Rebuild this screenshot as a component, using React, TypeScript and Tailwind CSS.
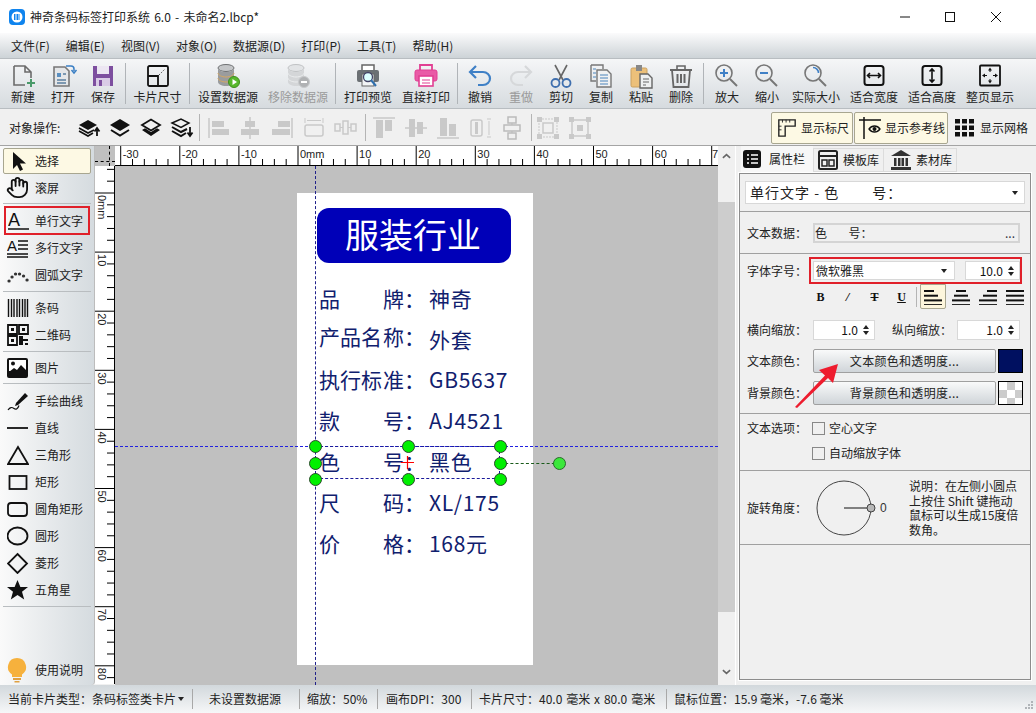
import React from "react";
import { Hand } from "lucide-react";

const S = ({ children, cn = "w-8 h-[26px]", vb = "0 0 32 26" }: { children: React.ReactNode; cn?: string; vb?: string }) => (
  <svg viewBox={vb} className={cn} fill="none">{children}</svg>
);

const Db = ({ gray }: { gray?: boolean }) => {
  const c1 = gray ? "#d4d6d8" : "#9a9c9e";
  const c2 = gray ? "#c0c2c4" : "#6f7173";
  return (
    <S>
      <ellipse cx="14" cy="5" rx="8" ry="3.5" fill={gray ? "#e2e4e6" : "#c4c6c8"} stroke={c2} />
      <path d="M6 5v14c0 2 3.5 4 8 4s8-2 8-4V5c0 2-3.5 4-8 4S6 7 6 5z" fill={c1} />
      <path d="M6 10c0 2 3.5 4 8 4s8-2 8-4M6 15c0 2 3.5 4 8 4s8-2 8-4" stroke={gray ? "#eceeef" : "#d8a860"} />
      <circle cx="22" cy="19" r="5.5" fill={gray ? "#b0b2b4" : "#58b82c"} stroke={gray ? "#c8cacc" : "#3f8f1c"} />
      {gray ? <path d="M19 19h6" stroke="#fff" strokeWidth="2" /> : <path d="M20.5 16l4.5 3-4.5 3z" fill="#fff" />}
    </S>
  );
};

const Mag = ({ children }: { children?: React.ReactNode }) => (
  <S>
    <circle cx="13" cy="10" r="8" stroke="#777" strokeWidth="1.6" />
    <path d="M19 16l7 7" stroke="#777" strokeWidth="2" />
    {children}
  </S>
);

const Fit = ({ children }: { children: React.ReactNode }) => (
  <S>
    <rect x="6.5" y="3" width="19" height="19" rx="2.5" stroke="#111" strokeWidth="2" />
    {children}
  </S>
);

const tools: { t: string; w: string; icon: React.ReactNode; gray?: boolean; sep?: string }[] = [
  { t: "新建", w: "w-[40px]", icon: <S><path d="M7 3h11l6 6v6M24 9h-6V3M7 3v19h11" stroke="#6b6b6b" strokeWidth="1.6" /><path d="M24 16v8M20 20h8" stroke="#4a9a6a" strokeWidth="2" /></S> },
  { t: "打开", w: "w-[40px]", icon: <S><path d="M7 4h11l4 4v15H7z" fill="#e4e6e8" stroke="#777" strokeWidth="1.6" /><rect x="10" y="10" width="4" height="4" fill="#5a8fc0" /><path d="M10 17h9M10 20h9M16 11h3" stroke="#5a7f9f" strokeWidth="1.4" /><path d="M19 3h5c2 0 3 1 3 3v2M24.5 7l2.5 3 2.5-3" stroke="#3a7fc4" strokeWidth="1.5" /></S> },
  { t: "保存", w: "w-[40px]", sep: "ml-[2px]", icon: <S><rect x="6" y="3" width="20" height="20" fill="#7d4f9f" /><rect x="10" y="3" width="12" height="8" fill="#ece6f2" /><rect x="9" y="15" width="14" height="8" fill="#d9cbe6" /><rect x="12" y="17" width="3" height="6" fill="#7d4f9f" /></S> },
  { t: "卡片尺寸", w: "w-[63px]", sep: "ml-0", icon: <S><rect x="6" y="3" width="20" height="20" rx="1.5" stroke="#111" strokeWidth="1.8" /><path d="M6 13h10v10" stroke="#111" strokeWidth="1.8" /><path d="M17 12l6-6" stroke="#555" strokeDasharray="1.5 1.5" /></S> },
  { t: "设置数据源", w: "w-[76px]", icon: <Db /> },
  { t: "移除数据源", w: "w-[64px]", gray: true, sep: "ml-[5px]", icon: <Db gray /> },
  { t: "打印预览", w: "w-[64px]", icon: <S><rect x="10" y="2" width="12" height="6" fill="#fff" stroke="#666" strokeWidth="1.5" /><rect x="5" y="7" width="22" height="12" rx="2" fill="#6b7074" /><rect x="10" y="11" width="12" height="12" fill="#f2f4f5" stroke="#666" /><circle cx="16" cy="14" r="4.5" fill="#dff" stroke="#446" strokeWidth="1.3" /><path d="M19 17l5 6" stroke="#2f6fae" strokeWidth="2" /></S> },
  { t: "直接打印", w: "w-[52px]", sep: "ml-[5px]", icon: <S><path d="M10 7V2h12v5" stroke="#e13f93" strokeWidth="1.8" /><rect x="5" y="7" width="22" height="11" rx="2" fill="#e95aa6" stroke="#e13f93" /><rect x="9" y="13" width="14" height="10" fill="#fff" stroke="#e13f93" strokeWidth="1.6" /><path d="M12 17h8M12 20h8" stroke="#e13f93" /></S> },
  { t: "撤销", w: "w-[44px]", icon: <S><path d="M12 3L6 9l6 6" stroke="#3f80c6" strokeWidth="2.2" /><path d="M6 9h13c4 0 7 3 7 6.5S23 22 19 22h-5" stroke="#3f80c6" strokeWidth="2.2" /></S> },
  { t: "重做", w: "w-[38px]", gray: true, icon: <S><path d="M20 3l6 6-6 6" stroke="#d6d8da" strokeWidth="2.2" /><path d="M26 9H13c-4 0-7 3-7 6.5S9 22 13 22h5" stroke="#d6d8da" strokeWidth="2.2" /></S> },
  { t: "剪切", w: "w-[42px]", icon: <S><path d="M10 2l8 15M22 2l-8 15" stroke="#666" strokeWidth="1.6" /><circle cx="10.5" cy="20" r="4" stroke="#3f6fae" strokeWidth="1.8" /><circle cx="21.5" cy="20" r="4" stroke="#3f6fae" strokeWidth="1.8" /></S> },
  { t: "复制", w: "w-[38px]", icon: <S><path d="M6 2h12v4" stroke="#777" strokeWidth="1.4" /><path d="M6 2v16h5" stroke="#777" strokeWidth="1.4" /><path d="M8 6h3M8 10h3M8 14h3" stroke="#4a84bb" /><path d="M12 7h10l4 4v13H12z" fill="#f0f1f2" stroke="#777" strokeWidth="1.4" /><path d="M15 12h8M15 15h8M15 18h8M15 21h8" stroke="#4a84bb" /></S> },
  { t: "粘贴", w: "w-[42px]", icon: <S><rect x="6" y="5" width="16" height="19" rx="1.5" fill="#ecc07a" stroke="#c9a060" /><rect x="11" y="2" width="6" height="6" fill="#888" /><path d="M15 11h8l4 4v10H15z" fill="#eef0f1" stroke="#666" strokeWidth="1.4" /><path d="M18 16h6M18 19h6M18 22h3" stroke="#666" /></S> },
  { t: "删除", w: "w-[38px]", sep: "ml-[3px]", icon: <S><path d="M5 7h22" stroke="#666" strokeWidth="2" /><path d="M12 7V3h8v4" stroke="#666" strokeWidth="1.6" /><path d="M7 7l1.5 17h15L25 7" stroke="#666" strokeWidth="1.8" /><path d="M12.5 11v9M16 11v9M19.5 11v9" stroke="#666" strokeWidth="2" /></S> },
  { t: "放大", w: "w-[46px]", icon: <Mag><path d="M13 6v8M9 10h8" stroke="#3f80c6" strokeWidth="2" /></Mag> },
  { t: "缩小", w: "w-[34px]", icon: <Mag><path d="M9 10h8" stroke="#3f80c6" strokeWidth="2" /></Mag> },
  { t: "实际大小", w: "w-[64px]", icon: <Mag><path d="M13 4.5a5.5 5.5 0 0 1 5.5 5.5" stroke="#3f80c6" strokeWidth="1.6" /></Mag> },
  { t: "适合宽度", w: "w-[52px]", icon: <Fit><path d="M9.5 12.5h13M12 10l-2.5 2.5L12 15M20 10l2.5 2.5L20 15" stroke="#111" strokeWidth="1.6" /></Fit> },
  { t: "适合高度", w: "w-[64px]", icon: <Fit><path d="M16 6v13M13.5 8.5L16 6l2.5 2.5M13.5 16.5L16 19l2.5-2.5" stroke="#111" strokeWidth="1.6" /></Fit> },
  { t: "整页显示", w: "w-[52px]", icon: <S><rect x="6" y="2.500" width="20" height="20" rx="1" stroke="#111" strokeWidth="1.800" /><path d="M16 4.500l-2 3h4zM16 20.500l-2-3h4zM8 12.500l3-2v4zM24 12.500l-3-2v4z" fill="#111" /><path d="M16 7v2M16 16v2M11 12.500h2M19 12.500h2" stroke="#111" /></S> },
];

const seps = new Set(["保存", "卡片尺寸", "移除数据源", "直接打印", "删除"]);

const Layer = ({ mode }: { mode: number }) => (
  <S cn="w-[24px] h-[24px]" vb="0 0 24 24">
    {mode === 1 && <g><path d="M2 9l9-5 9 5-9 5z" fill="#111" /><path d="M2 12l9 5 6-3M2 15l9 5 5-3" stroke="#111" strokeWidth="1.6" /><path d="M20 20v-7M17.5 15.5L20 12l2.500 3.500" stroke="#111" strokeWidth="1.800" /></g>}
    {mode === 2 && <g><path d="M2 9l10-6 10 6-10 6z" fill="#111" /><path d="M3 14l9 5.500 9-5.500" stroke="#111" strokeWidth="2" /></g>}
    {mode === 3 && <g><path d="M3 9l9-5.500L21 9l-9 5.500z" stroke="#111" strokeWidth="1.800" /><path d="M3 14l9 6 9-6-3-1.800-6 3.800-6-3.800z" fill="#111" /></g>}
    {mode === 4 && <g><path d="M2 7l9-4 8 4-8 4.500z" stroke="#111" strokeWidth="1.500" /><path d="M2 11l9 5 6-3M2 15l9 5 5-3" stroke="#111" strokeWidth="2" /><path d="M20 11v8M17.500 16.500L20 20l2.500-3.500" stroke="#111" strokeWidth="1.800" /></g>}
  </S>
);

const G = "#c9c9c9";
const grayIcons: React.ReactNode[] = [
  <><path d="M3 2v20" stroke={G} strokeWidth="1.500" /><rect x="6" y="5" width="12" height="6" fill={G} /><rect x="6" y="13" width="17" height="6" fill={G} /></>,
  <><path d="M12 1v22" stroke={G} strokeWidth="1.500" /><rect x="7" y="5" width="10" height="6" fill={G} /><rect x="3" y="13" width="18" height="6" fill={G} /></>,
  <><path d="M22 2v20" stroke={G} strokeWidth="1.500" /><rect x="8" y="5" width="12" height="6" fill={G} /><rect x="2" y="13" width="18" height="6" fill={G} /></>,
  <><path d="M3 2v5M21 2v5M5 4.500h14" stroke={G} /><rect x="3" y="9" width="18" height="11" rx="2" stroke={G} strokeWidth="1.500" /></>,
  <><rect x="1" y="8" width="5" height="7" stroke={G} strokeWidth="1.500" /><rect x="9" y="5" width="5" height="13" stroke={G} strokeWidth="1.500" /><rect x="17" y="8" width="5" height="7" stroke={G} strokeWidth="1.500" /><path d="M6 11.500h3M14 11.500h3" stroke={G} /></>,
  <><path d="M1 2h22" stroke={G} strokeWidth="1.500" /><rect x="4" y="4" width="7" height="18" fill={G} /><rect x="13" y="4" width="7" height="11" fill={G} /></>,
  <><path d="M1 12h22" stroke={G} strokeWidth="1.500" /><rect x="5" y="3" width="6" height="18" fill={G} /><rect x="13" y="6" width="6" height="12" fill={G} /></>,
  <><path d="M1 22h22" stroke={G} strokeWidth="1.500" /><rect x="4" y="2" width="7" height="18" fill={G} /><rect x="13" y="8" width="7" height="12" fill={G} /></>,
  <><rect x="3" y="4" width="11" height="16" rx="2" stroke={G} strokeWidth="1.500" /><rect x="7" y="6" width="3" height="12" fill={G} /><path d="M19 3h4M19 21h4M21 5v14" stroke={G} /></>,
  <><rect x="8" y="1" width="8" height="6" stroke="#bbb" strokeWidth="1.500" /><rect x="4" y="9" width="16" height="6" stroke="#bbb" strokeWidth="1.500" /><rect x="8" y="17" width="8" height="6" stroke="#bbb" strokeWidth="1.500" /><path d="M12 7v2M12 15v2" stroke="#bbb" /></>,
  <><path d="M3 3h18v18H3z" stroke={G} strokeDasharray="2 1" /><rect x="7" y="7" width="10" height="10" stroke={G} strokeWidth="1.500" /><path d="M1 1h5v5H1zM18 1h5v5h-5zM1 18h5v5H1zM18 18h5v5h-5z" fill={G} /></>,
  <><path d="M4 4h16v16H4z" stroke={G} strokeWidth="1.500" /><path d="M1 1h5v5H1zM18 1h5v5h-5zM1 18h5v5H1zM18 18h5v5h-5zM9 9h6v6H9z" fill={G} /></>,
];

const Gi = ({ i }: { i: number }) => (
  <div className="w-[32px] flex justify-center"><S cn="w-[24px] h-[24px]" vb="0 0 24 24">{grayIcons[i]}</S></div>
);

const Vsep = () => <div className="w-px h-[27px] bg-[#b4b4b4]" />;

const LeftItem = ({ icon, t, cn = "" }: { icon: React.ReactNode; t: string; cn?: string }) => (
  <div className={`flex items-center h-[27px] ${cn}`}>
    <div className="w-[35px] pl-[7px] flex justify-start shrink-0">{icon}</div>
    <span className="text-[12px] text-[#222] whitespace-nowrap">{t}</span>
  </div>
);

const Ls = ({ children }: { children: React.ReactNode }) => (
  <svg viewBox="0 0 22 22" className="w-[22px] h-[22px]" fill="none">{children}</svg>
);

const LSep = ({ cn }: { cn: string }) => <div className={`h-px mx-[3px] bg-[#b9bdc0] ${cn}`} />;

const Ruler = () => {
  const ticks: React.ReactNode[] = [];
  for (let i = -40; i < 45; i++) {
    const x = 298 + i * 11.82 - 115;
    if (x < 0 || x > 603) continue;
    const major = i % 5 === 0;
    ticks.push(<line key={i} x1={x} x2={x} y1={major ? 0 : 13} y2={19} stroke="#000" />);
    if (major) ticks.push(
      <text key={"t" + i} x={i === 35 ? x + 0.300 : x + 2} y={12} fontSize="11" fill="#222" fontFamily="'Liberation Sans',sans-serif">
        {i === 0 ? "0mm" : i === 35 ? "7" : String(i * 2)}
      </text>
    );
  }
  return (
    <svg className="w-[603px] h-[20px] block" viewBox="0 0 603 20">
      <rect width="603" height="20" fill="#fff" />
      <line x1="0" x2="603" y1="19.500" y2="19.500" stroke="#000" />
      {ticks}
    </svg>
  );
};

const VRuler = () => {
  const ticks: React.ReactNode[] = [];
  for (let i = -2; i < 42; i++) {
    const y = 193 - 166 + i * 11.82;
    if (y < 0 || y > 518) continue;
    const major = i % 5 === 0;
    ticks.push(<line key={i} y1={y} y2={y} x1={major ? 0 : 12} x2={19} stroke="#000" />);
    if (major) ticks.push(
      <text key={"t" + i} x={0} y={0} transform={`translate(3 ${y + 2}) rotate(90)`} fontSize="11" fill="#222" fontFamily="'Liberation Sans',sans-serif">
        {i === 0 ? "0mm" : String(i * 2)}
      </text>
    );
  }
  return (
    <svg className="w-[20px] h-[518px] block" viewBox="0 0 20 518">
      <rect width="20" height="518" fill="#fff" />
      <line x1="19.500" x2="19.500" y1="0" y2="518" stroke="#000" />
      {ticks}
    </svg>
  );
};

const rows: [string, string, string, string][] = [
  ["品", "牌：", "神奇", ""],
  ["产品名", "称：", "外套", "-translate-y-[3px]"],
  ["执行标", "准：", "GB5637", ""],
  ["款", "号：", "AJ4521", ""],
  ["色", "号：", "黑色", ""],
  ["尺", "码：", "XL/175", ""],
  ["价", "格：", "168元", ""],
];

const Handle = ({ cn }: { cn: string }) => (
  <div className={`absolute w-[13px] h-[13px] rounded-full bg-[#00f000] border border-[#2a4a2a] ${cn}`} />
);

const Spin = ({ v, cn }: { v: string; cn: string }) => (
  <div className={`flex items-center justify-end bg-white border border-[#d8d8d8] text-[12px] text-[#111] ${cn}`}>
    <span>{v}</span>
    <span className="w-[16px] flex flex-col items-center gap-[2px]">
      <span className="w-0 h-0 border-x-[3px] border-x-transparent border-b-[4px] border-b-[#222]" />
      <span className="w-0 h-0 border-x-[3px] border-x-transparent border-t-[4px] border-t-[#222]" />
    </span>
  </div>
);

const Label = ({ t, cn = "" }: { t: string; cn?: string }) => (
  <span className={`text-[12px] text-[#222] whitespace-nowrap ${cn}`}>{t}</span>
);

const Caret = () => <span className="w-0 h-0 border-x-[3px] border-x-transparent border-t-[4px] border-t-[#222]" />;

const PSep = () => <div className="h-px bg-[#a0a0a0] shrink-0" />;

const AlignIcon = ({ lines }: { lines: [number, number][] }) => (
  <svg viewBox="0 0 18 16" className="w-[18px] h-[16px]">
    {lines.map(([x, w], i) => <rect key={i} x={x} y={1 + i * 4.700} width={w} height="2" fill="#111" />)}
  </svg>
);

export default function App() {
  return (
    <div className="relative w-[1036px] h-[713px] overflow-hidden flex flex-col bg-[#f0f0f0] font-['Noto_Sans_CJK_SC','Noto_Sans',sans-serif]">
      {/* title bar */}
      <div className="h-[33px] bg-white flex items-center shrink-0">
        <svg viewBox="0 0 16 16" className="w-[16px] h-[16px] ml-[9px] mr-[5px]">
          <rect width="16" height="16" rx="4" fill="#0f84ee" />
          <circle cx="8" cy="8" r="5.500" fill="#fff" />
          <path d="M5.500 5v6M7 5v6M8.500 5v6M10 5v6" stroke="#0f84ee" />
        </svg>
        <span className="text-[12px] text-[#222] [word-spacing:1.500px]">神奇条码标签打印系统 6.0 - 未命名2.lbcp*</span>
        <div className="ml-auto flex items-center">
          <svg viewBox="0 0 140 20" className="w-[140px] h-[20px] mr-[4px]">
            <path d="M8 10h10" stroke="#111" />
            <rect x="53.500" y="5.500" width="9" height="9" fill="none" stroke="#111" />
            <path d="M99 5l10 10M109 5l-10 10" stroke="#111" />
          </svg>
        </div>
      </div>
      {/* menu */}
      <div className="h-[25px] shrink-0 flex items-center pl-[11px] gap-[16px] bg-linear-to-b from-[#fbfbfc] to-[#cdd3d7] text-[12px] text-[#222]">
        {["文件(F)", "编辑(E)", "视图(V)", "对象(O)", "数据源(D)", "打印(P)", "工具(T)", "帮助(H)"].map((m) => (
          <span key={m} className="whitespace-nowrap">{m}</span>
        ))}
      </div>
      {/* toolbar */}
      <div className="h-[51px] shrink-0 flex items-start pl-[3px] pt-[4px] border-y border-[#b8bdc1] bg-linear-to-b from-[#f5f6f7] to-[#d6dbdf]">
        {tools.map((tool) => (
          <React.Fragment key={tool.t}>
            <div className={`${tool.w} shrink-0 flex flex-col items-center`}>
              {tool.icon}
              <span className={`text-[12px] leading-[16px] whitespace-nowrap ${tool.gray ? "text-[#9a9a9a]" : "text-[#222]"}`}>{tool.t}</span>
            </div>
            {seps.has(tool.t) && <div className={`w-px h-[41px] bg-[#b0b4b8] shrink-0 ${tool.sep ?? ""}`} />}
          </React.Fragment>
        ))}
      </div>
      {/* object row */}
      <div className="h-[37px] shrink-0 flex items-center pl-[9px] pt-px bg-[#f0f0f0] border-b border-[#a4a4a4]">
        <span className="text-[12px] text-[#222] w-[64px] whitespace-nowrap">对象操作:</span>
        <div className="flex w-[126px]">
          {[1, 2, 3, 4].map((m) => <div key={m} className="w-[31px] flex justify-center"><Layer mode={m} /></div>)}
        </div>
        <Vsep />
        <div className="flex ml-[2px]">{[0, 1, 2, 3, 4].map((i) => <Gi key={i} i={i} />)}</div>
        <div className="ml-[3px]"><Vsep /></div>
        <div className="flex ml-[2px]">{[5, 6, 7, 8, 9].map((i) => <Gi key={i} i={i} />)}</div>
        <div className="ml-[3px]"><Vsep /></div>
        <div className="flex">{[10, 11].map((i) => <Gi key={i} i={i} />)}</div>
        <div className="ml-auto flex items-center pr-[8px]">
          <div className="w-[82px] h-[32px] flex items-center gap-[4px] pl-[5px] rounded-[2px] border border-[#a8a690] bg-[#fdf9e4]">
            <svg viewBox="0 0 22 22" className="w-[20px] h-[20px] shrink-0" fill="none"><path d="M2 2h18v7H9v11H2z" stroke="#222" strokeWidth="1.500" /><path d="M6 2v3M10 2v3M14 2v3M2 9h3M2 13h3" stroke="#222" /></svg>
            <span className="text-[12px] text-[#222] whitespace-nowrap">显示标尺</span>
          </div>
          <div className="w-[94px] h-[32px] ml-px flex items-center gap-[2px] pl-[4px] rounded-[2px] border border-[#a8a690] bg-[#fdf9e4]">
            <svg viewBox="0 0 24 22" className="w-[24px] h-[22px] shrink-0" fill="none"><path d="M0 3h22M5 0v22" stroke="#111" strokeWidth="1.500" /><path d="M10 12c3-4 8-4 11 0-3 4-8 4-11 0z" stroke="#111" strokeWidth="1.300" /><circle cx="15.500" cy="12" r="2" fill="#111" /></svg>
            <span className="text-[12px] text-[#222] whitespace-nowrap">显示参考线</span>
          </div>
          <svg viewBox="0 0 20 18" className="w-[20px] h-[18px] ml-[7px] mr-[5px] shrink-0" fill="#111">
            {[0, 7, 14].flatMap((x) => [0, 6.500, 13].map((y) => <rect key={`${x}-${y}`} x={x} y={y} width="5" height="4.500" />))}
          </svg>
          <span className="text-[12px] text-[#222] whitespace-nowrap">显示网格</span>
        </div>
      </div>
      {/* main */}
      <div className="flex-1 flex min-h-0">
        {/* left panel */}
        <div className="w-[95px] shrink-0 flex flex-col pt-[2px] pb-[2px] border-r border-[#bcbcbc] rounded-br-[4px] bg-linear-to-r from-[#fafafa] to-[#d5dbdf]">
          <LeftItem
            cn="!h-[26px] mx-[3px] border border-[#a8a690] rounded-[2px] bg-[#fdf9e4] [&>div]:pl-[3px] [&>div]:w-[31px]"
            t="选择"
            icon={<Ls><path d="M6 2v17l4-4 3 6 3-1.500-3-6h6z" fill="#111" /></Ls>}
          />
          <LeftItem t="滚屏" icon={<Hand size={23} strokeWidth={1.900} className="text-[#111] -ml-[1px]" />} />
          <LSep cn="mt-[2px]" />
          <LeftItem
            cn="!h-[29px] mt-[2px] -mb-px mx-[4px] mr-[4px] border-2 border-[#e0202a] [&>div]:pl-[2px] [&>div]:w-[29px]"
            t="单行文字"
            icon={<Ls><text x="0" y="16" fontSize="18" fill="#111" fontFamily="'Liberation Sans',sans-serif">A</text><path d="M0 19h21" stroke="#111" strokeWidth="1.500" /></Ls>}
          />
          <LeftItem t="多行文字" icon={<Ls><text x="0" y="14" fontSize="15" fill="#111" fontFamily="'Liberation Sans',sans-serif">A</text><path d="M11 4h10M11 8h10M11 12h10M0 17h21M0 20h21" stroke="#111" strokeWidth="1.300" /></Ls>} />
          <LeftItem t="圆弧文字" icon={<Ls><path d="M2 17h.1M5 13h.1M8.500 10h.1M12.500 10h.1M16.500 12h.1M20 16h.1" stroke="#333" strokeWidth="3.200" strokeLinecap="round" /></Ls>} />
          <LSep cn="mt-[3px]" />
          <LeftItem cn="mt-[2px]" t="条码" icon={<Ls><path d="M1.500 2v18M4.500 2v18M7 2v18M10 2v18M12.500 2v18M15.500 2v18M18 2v18M20.500 2v18" stroke="#111" strokeWidth="1.400" /></Ls>} />
          <LeftItem t="二维码" icon={<Ls><path d="M1 1h9v9H1zM12 1h9v9h-9zM1 12h9v9H1z" stroke="#111" strokeWidth="1.800" /><path d="M4 4h3v3H4zM15 4h3v3h-3zM4 15h3v3H4zM12 12h4v3h5v2h-5v4h-4zM18 19h3v2h-3z" fill="#111" /></Ls>} />
          <LSep cn="mt-[3px]" />
          <LeftItem cn="mt-[2px]" t="图片" icon={<Ls><rect x="0" y="1" width="21" height="20" rx="2" fill="#111" /><rect x="2" y="3" width="17" height="11" fill="#fff" /><circle cx="6" cy="6.500" r="2" fill="#111" /><path d="M2 15l5-4 3 2 4-5 5 5v3H2z" fill="#111" /></Ls>} />
          <LSep cn="mt-[2px]" />
          <LeftItem cn="mt-[3px]" t="手绘曲线" icon={<Ls><path d="M9 13L18 3l3 3-10 9-3 1z" fill="#111" /><path d="M1 20c2-3 4-3 6-1.500s4 0 5-3" stroke="#111" strokeWidth="1.200" /></Ls>} />
          <LeftItem t="直线" icon={<Ls><path d="M0 11h21" stroke="#111" strokeWidth="1.800" /></Ls>} />
          <LeftItem t="三角形" icon={<Ls><path d="M11 3L1 20h20z" stroke="#111" strokeWidth="1.800" /></Ls>} />
          <LeftItem t="矩形" icon={<Ls><rect x="2.500" y="5" width="17" height="13" stroke="#111" strokeWidth="1.800" /></Ls>} />
          <LeftItem t="圆角矩形" icon={<Ls><rect x="1" y="5" width="19" height="13" rx="3" stroke="#111" strokeWidth="1.800" /></Ls>} />
          <LeftItem t="圆形" icon={<Ls><ellipse cx="10.500" cy="11" rx="10" ry="8.500" stroke="#111" strokeWidth="1.800" /></Ls>} />
          <LeftItem t="菱形" icon={<Ls><path d="M10.500 2l9.500 9.500L10.500 21 1 11.500z" stroke="#111" strokeWidth="1.800" /></Ls>} />
          <LeftItem t="五角星" icon={<Ls><path d="M10.500 1l2.900 7h7.600l-6 4.800 2.200 7.700-6.700-4.400-6.700 4.400 2.200-7.700-6-4.800h7.600z" fill="#111" /></Ls>} />
          <LSep cn="mt-[3px]" />
          <div className="flex-1" />
          <LeftItem t="使用说明" icon={<svg viewBox="0 0 20 26" className="w-[20px] h-[26px]"><path d="M10 1a9 9 0 0 0-5 16.500V20h10v-2.500A9 9 0 0 0 10 1z" fill="#f6b13d" /><rect x="6" y="21" width="8" height="2" fill="#e0a040" /><rect x="7.500" y="24" width="5" height="1.500" fill="#e0a040" /></svg>} />
        </div>
        {/* rulers + canvas */}
        <div className="w-[623px] shrink-0 flex flex-col">
          <div className="flex h-[20px]">
            <div className="relative w-[20px] bg-[#c0c0c0]">
              <div className="absolute left-[14px] top-0 h-full border-l border-dashed border-black" />
              <div className="absolute left-0 top-[15px] w-full border-t border-dashed border-black" />
            </div>
            <Ruler />
          </div>
          <div className="flex flex-1 min-h-0">
            <VRuler />
            <div className="relative flex-1 bg-[#c0c0c0] overflow-hidden">
              {/* card: canvas origin x115 y166 */}
              <div className="absolute left-[182px] top-[27px] w-[236px] h-[472px] bg-white flex flex-col">
                <div className="mt-[15px] ml-[20px] w-[194px] h-[55px] pb-[3px] pr-[2px] shrink-0 rounded-[12px] bg-[#0000b8] flex items-center justify-center text-white text-[34px] leading-none">服装行业</div>
                <div className="mt-[15px] ml-[22px] flex flex-col text-[#10206e]">
                  {rows.map(([a, b, c, lc]) => (
                    <div key={c} className="h-[40.800px] flex items-center text-[21px] leading-none whitespace-nowrap">
                      <div className={`w-[106px] flex justify-between ${lc}`}><span>{a}</span><span>{b}</span></div>
                      <span className="ml-[4px] tracking-[0.700px]">{c}</span>
                    </div>
                  ))}
                </div>
              </div>
              {/* guides */}
              <div className="absolute left-0 right-0 top-[280px] border-t border-dashed border-[#2020e0]" />
              <div className="absolute top-0 bottom-0 left-[200px] border-l border-dashed border-[#20208a]" />
              {/* selection */}
              <div className="absolute left-[200px] top-[280px] w-[185px] h-[33px] border border-dashed border-[#1a1a9a]" />
              <div className="absolute left-[385px] top-[297px] w-[60px] border-t border-dashed border-[#1a5a1a]" />
              <Handle cn="left-[194px] top-[274px]" />
              <Handle cn="left-[287px] top-[274px]" />
              <Handle cn="left-[379px] top-[274px]" />
              <Handle cn="left-[194px] top-[291px]" />
              <Handle cn="left-[379px] top-[291px]" />
              <Handle cn="left-[194px] top-[307px]" />
              <Handle cn="left-[287px] top-[307px]" />
              <Handle cn="left-[379px] top-[307px]" />
              <div className="absolute left-[438px] top-[291px] w-[13px] h-[13px] rounded-full bg-[#3be83b] border border-[#2a6a2a]" />
              <svg viewBox="0 0 13 13" className="absolute left-[286px] top-[290px] w-[13px] h-[13px]">
                <path d="M0 6.500h13M6.500 0v13" stroke="#ff0000" strokeWidth="1.200" />
              </svg>
            </div>
          </div>
        </div>
        {/* scrollbar */}
        <div className="w-[18px] shrink-0 flex flex-col items-center bg-[#f0f0f0] border-r border-white">
          <svg viewBox="0 0 10 6" className="w-[9px] h-[6px] mt-[7px]" fill="none"><path d="M1 5l4-3.500L9 5" stroke="#666" strokeWidth="1.800" /></svg>
          <div className="w-full h-[410px] mt-[43px] bg-[#cdcdcd]" />
          <div className="flex-1" />
          <svg viewBox="0 0 10 6" className="w-[9px] h-[6px] mb-[10px]" fill="none"><path d="M1 1l4 3.500L9 1" stroke="#666" strokeWidth="1.800" /></svg>
        </div>
        {/* right panel */}
        <div className="flex-1 flex flex-col min-w-0 pl-[2px] pr-[4px] pb-[4px]">
          <div className="flex h-[26px] pl-[3px] shrink-0 items-end">
            <div className="w-[72px] h-[26px] bg-[#f7f7f7] flex items-center gap-[8px] pl-[2px]">
              <svg viewBox="0 0 18 18" className="w-[18px] h-[18px] shrink-0"><rect width="18" height="18" rx="3" fill="#111" /><path d="M4 5h2M8 5h7M4 9h2M8 9h7M4 13h2M8 13h7" stroke="#fff" strokeWidth="1.500" /></svg>
              <span className="text-[12px] text-[#222]">属性栏</span>
            </div>
            <div className="w-[71px] h-[24px] flex items-center gap-[5px] pl-[4px] border border-[#dcdcdc] bg-[#f0f0f0]">
              <svg viewBox="0 0 20 20" className="w-[20px] h-[20px] shrink-0" fill="none"><rect x="1" y="1" width="18" height="18" rx="1.500" stroke="#222" strokeWidth="2" /><path d="M1 6h18" stroke="#222" strokeWidth="2" /><rect x="4" y="10" width="5" height="6" stroke="#222" strokeWidth="1.500" /><rect x="11" y="10" width="5" height="6" stroke="#222" strokeWidth="1.500" /></svg>
              <span className="text-[12px] text-[#222]">模板库</span>
            </div>
            <div className="w-[73px] h-[24px] flex items-center gap-[5px] pl-[7px] border border-l-0 border-[#dcdcdc] bg-[#f0f0f0]">
              <svg viewBox="0 0 20 20" className="w-[20px] h-[20px] shrink-0"><path d="M10 0l10 6H0z" fill="#333" /><path d="M3 8h2.500v8H3zM7 8h2.500v8H7zM10.500 8H13v8h-2.500zM14.500 8H17v8h-2.500z" fill="#333" /><rect y="17" width="20" height="3" fill="#333" /></svg>
              <span className="text-[12px] text-[#222]">素材库</span>
            </div>
          </div>
          <div className="flex-1 flex flex-col min-h-0 border border-white">
            <div className="flex-1 flex flex-col min-h-0 border border-[#8c8c8c] bg-[#f0f0f0]">
              <div className="h-[37px] shrink-0 px-[5px] flex items-center">
                <div className="w-[280px] h-[23px] flex items-center justify-between bg-white border border-[#d8d8d8] pl-[4px] pr-[6px] text-[14px] text-[#222]">
                  <span className="tracking-[1px] whitespace-pre">单行文字 - 色        号：</span>
                  <Caret />
                </div>
              </div>
              <PSep />
              <div className="h-[41px] shrink-0 flex items-center pl-[7px]">
                <Label t="文本数据：" cn="w-[66px]" />
                <div className="w-[207px] h-[20px] flex items-center justify-between border-2 border-[#d4d4d4] pr-[3px]">
                  <span className="text-[12px] text-[#222] whitespace-pre">色        号：</span>
                  <span className="text-[12px] text-[#334] leading-none">...</span>
                </div>
              </div>
              <PSep />
              <div className="flex flex-col h-[159px] shrink-0">
                <div className="flex items-center pl-[7px] mt-[3px]">
                  <Label t="字体字号：" cn="w-[62px]" />
                  <div className="w-[213px] h-[27px] flex items-center border-2 border-[#e0202a] pl-[2px]">
                    <div className="w-[142px] h-[19px] flex items-center justify-between bg-white border border-[#d8d8d8] pl-[2px] pr-[7px] text-[12px] text-[#222]">
                      <span>微软雅黑</span><Caret />
                    </div>
                    <Spin v="10.0" cn="w-[55px] h-[19px] ml-[10px]" />
                  </div>
                </div>
                <div className="flex items-center h-[25px] pl-[67px]">
                  <span className="w-[27px] text-center text-[12px] font-bold font-['Liberation_Serif',serif] text-[#111]">B</span>
                  <span className="w-[27px] text-center text-[13px] font-bold italic font-['Liberation_Serif',serif] text-[#111]">/</span>
                  <span className="w-[27px] text-center text-[12px] font-bold line-through font-['Liberation_Serif',serif] text-[#111]">T</span>
                  <span className="w-[27px] text-center text-[12px] font-bold underline font-['Liberation_Serif',serif] text-[#111]">U</span>
                  <div className="w-px h-[20px] ml-px bg-[#b4b4b4]" />
                  <div className="w-[26px] h-[25px] ml-[3px] flex items-center justify-center bg-[#fdf6dc] border border-[#a8a690] rounded-b-[2px]">
                    <AlignIcon lines={[[0, 10], [0, 14], [0, 18], [0, 18]]} />
                  </div>
                  <div className="w-[26px] ml-[2px] flex justify-center"><AlignIcon lines={[[4, 10], [2, 14], [0, 18], [0, 18]]} /></div>
                  <div className="w-[26px] ml-px flex justify-center"><AlignIcon lines={[[8, 10], [4, 14], [0, 18], [0, 18]]} /></div>
                  <div className="w-[26px] ml-px flex justify-center"><AlignIcon lines={[[0, 18], [0, 18], [0, 18], [0, 18]]} /></div>
                </div>
                <div className="flex items-center pl-[7px] mt-[11px] h-[20px]">
                  <Label t="横向缩放：" cn="w-[66px]" />
                  <Spin v="1.0" cn="w-[62px] h-[20px]" />
                  <Label t="纵向缩放：" cn="w-[65px] ml-[17px]" />
                  <Spin v="1.0" cn="w-[63px] h-[20px]" />
                </div>
                <div className="flex items-center pl-[7px] mt-[9px] h-[24px]">
                  <Label t="文本颜色：" cn="w-[66px]" />
                  <div className="w-[183px] h-[24px] flex items-center justify-center rounded-[2px] border border-[#a0a0a0] bg-linear-to-b from-[#f9fafa] to-[#d0d5d9] text-[12px] text-[#222] tracking-[0.300px]">文本颜色和透明度...</div>
                  <div className="w-[25px] h-[24px] ml-[2px] bg-[#001060] border border-black" />
                </div>
                <div className="flex items-center pl-[7px] mt-[8px] h-[24px]">
                  <Label t="背景颜色：" cn="w-[66px]" />
                  <div className="w-[183px] h-[24px] flex items-center justify-center rounded-[2px] border border-[#a0a0a0] bg-linear-to-b from-[#f9fafa] to-[#d0d5d9] text-[12px] text-[#222] tracking-[0.300px]">背景颜色和透明度...</div>
                  <div className="w-[25px] h-[24px] ml-[2px] border border-black bg-[repeating-conic-gradient(#cccccc_0_25%,#ffffff_0_50%)] bg-[length:16px_16px]" />
                </div>
              </div>
              <PSep />
              <div className="h-[56px] shrink-0 flex flex-col pl-[7px] pt-[4px]">
                <div className="flex items-center h-[20px]">
                  <Label t="文本选项：" cn="w-[65px]" />
                  <span className="w-[13px] h-[13px] border border-[#888] bg-[#f0f0f0] mr-[4px]" />
                  <Label t="空心文字" />
                </div>
                <div className="flex items-center h-[20px] mt-[5px]">
                  <span className="w-[65px]" />
                  <span className="w-[13px] h-[13px] border border-[#888] bg-[#f0f0f0] mr-[4px]" />
                  <Label t="自动缩放字体" />
                </div>
              </div>
              <PSep />
              <div className="h-[73px] shrink-0 flex items-center pl-[7px]">
                <Label t="旋转角度：" cn="w-[68px]" />
                <svg viewBox="0 0 72 60" className="w-[72px] h-[60px] shrink-0">
                  <circle cx="29" cy="30" r="27" fill="none" stroke="#444" strokeWidth="1" />
                  <path d="M29 30h27" stroke="#111" />
                  <circle cx="56" cy="30" r="4" fill="#b8b8b8" stroke="#444" />
                  <text x="65" y="34" fontSize="12" fill="#333" fontFamily="'Liberation Sans',sans-serif">0</text>
                </svg>
                <p className="ml-[22px] mt-px text-[12px] leading-[14.500px] text-[#222] whitespace-nowrap">
                  <span className="block">说明：在左侧小圆点</span>
                  <span className="block">上按住 Shift 键拖动</span>
                  <span className="block">鼠标可以生成15度倍</span>
                  <span className="block">数角。</span>
                </p>
              </div>
              <PSep />
              <div className="flex-1" />
            </div>
          </div>
        </div>
      </div>
      {/* status bar */}
      <div className="h-[28px] shrink-0 flex items-center bg-linear-to-b from-[#d2d8dc] to-[#f6f7f8] text-[12px] text-[#222]">
        <div className="w-[193px] pl-[8px] h-[20px] flex items-center gap-[2px] border-r border-[#a8a8a8] whitespace-nowrap"><span>当前卡片类型：条码标签类卡片</span><Caret /></div>
        <div className="w-[107px] pl-[16px] h-[20px] flex items-center border-r border-[#a8a8a8] whitespace-nowrap">未设置数据源</div>
        <div className="w-[78px] pl-[7px] h-[20px] flex items-center border-r border-[#a8a8a8] whitespace-nowrap">缩放：50%</div>
        <div className="w-[94px] pl-[8px] h-[20px] flex items-center border-r border-[#a8a8a8] whitespace-nowrap">画布DPI：300</div>
        <div className="w-[195px] pl-[7px] h-[20px] flex items-center border-r border-[#a8a8a8] whitespace-nowrap [word-spacing:1.200px]">卡片尺寸：40.0 毫米 x 80.0 毫米</div>
        <div className="pl-[7px] whitespace-nowrap">鼠标位置：15.9 毫米，-7.6 毫米</div>
        <svg viewBox="0 0 10 10" className="w-[10px] h-[10px] ml-auto mr-[2px] self-end mb-[3px]" fill="#b0b4b8">
          <path d="M7 1h2v2H7zM4 4h2v2H4zM7 4h2v2H7zM1 7h2v2H1zM4 7h2v2H4zM7 7h2v2H7z" />
        </svg>
      </div>
      {/* annotation arrow */}
      <svg viewBox="0 0 50 50" className="absolute left-[792px] top-[360px] w-[50px] h-[50px]">
        <path d="M3 47L33 15.500 27 10 46 4 41 23 36 18 5 48z" fill="#ee1c2e" />
      </svg>
    </div>
  );
}
